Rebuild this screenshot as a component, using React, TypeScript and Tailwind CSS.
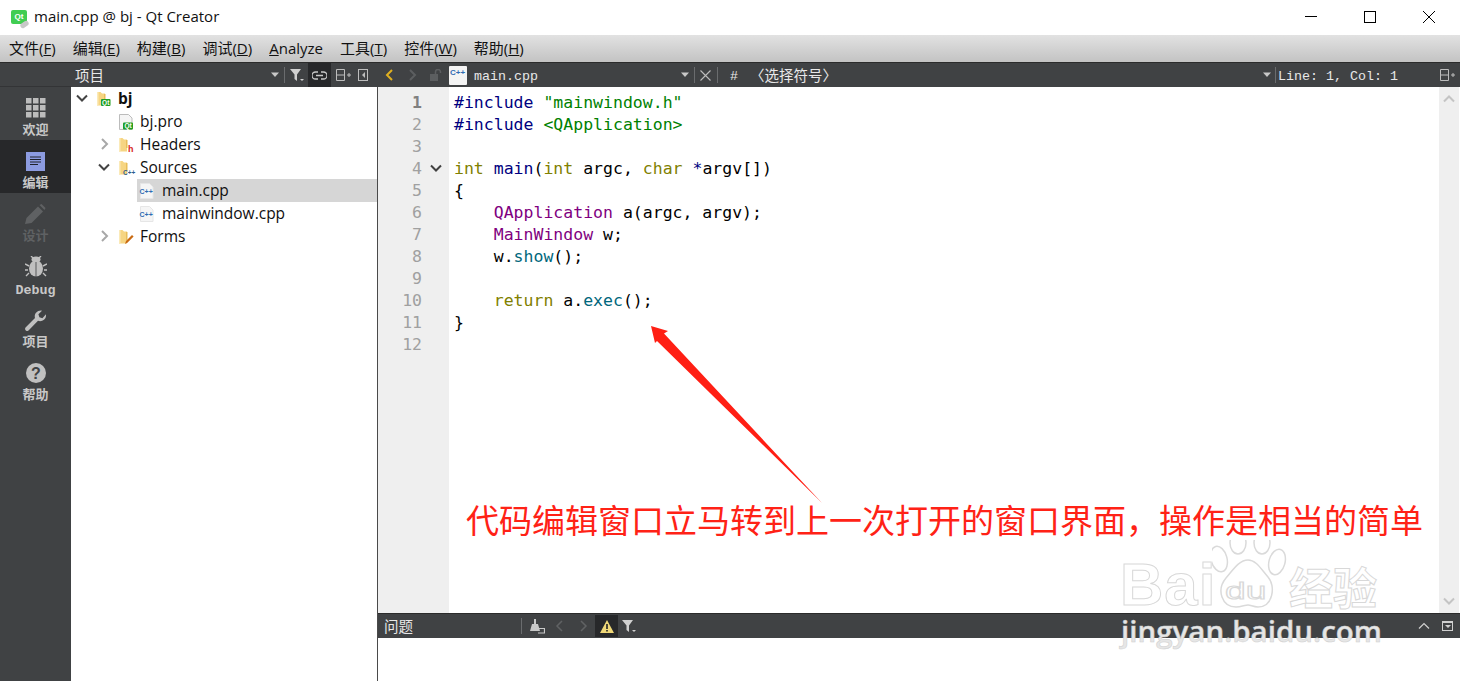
import React from "react";

const mono = "font-['DejaVu_Sans_Mono',monospace]";
const ui = "font-['Open_Sans','Noto_Sans_CJK_SC',sans-serif]";
const tool = "font-['Liberation_Mono','Noto_Sans_CJK_SC',monospace]";

function Tri({ c = "#c8c8c8" }: { c?: string }) {
  return (
    <svg width="10" height="6" viewBox="0 0 10 6">
      <path d="M1 0.5h8L5 5z" fill={c} />
    </svg>
  );
}
function Sep() {
  return <div className="w-px h-[16px] bg-[#6a6c6e]" />;
}
function FilterIcon() {
  return (
    <svg width="15" height="14" viewBox="0 0 15 14">
      <path d="M0 1h11L7 6.5V13L4.500 11V6.500z" fill="#d0d0d0" />
      <path d="M10 11h4l-2 2z" fill="#d0d0d0" />
    </svg>
  );
}
function SplitIcon() {
  return (
    <svg width="15" height="12" viewBox="0 0 15 12" fill="none" stroke="#bdbdbd">
      <path d="M0.5 0.5h8v11h-8zM0.5 6h8M11 6h4M13 4v4" />
    </svg>
  );
}
function Chevron({ dir, c = "#444", s = 12, w = 2 }: { dir: "l" | "r" | "d" | "u"; c?: string; s?: number; w?: number }) {
  const d = { l: "M8 1L3 6l5 5", r: "M4 1l5 5-5 5", d: "M1 3.5l5 5 5-5", u: "M1 8.5l5-5 5 5" }[dir];
  return (
    <svg width={s} height={s} viewBox="0 0 12 12" fill="none" stroke={c} strokeWidth={w}>
      <path d={d} />
    </svg>
  );
}
function Folder({ badge }: { badge: "qt" | "h" | "c" | "form" }) {
  return (
    <svg width="18" height="16" viewBox="0 0 18 16">
      <path d="M1 1h3.5l1.5 1.5h3v12H1z" fill="#f6d582" />
      <path d="M1 1h1.5v13.5H1z" fill="#fbeab8" />
      <path d="M8 3h1.5v8H8z" fill="#e8bd58" />
      {badge === "qt" && (
        <>
          <rect x="5" y="8" width="9.5" height="7" rx="1" fill="#1f9e24" />
          <text x="9.7" y="13.6" fontSize="6.5" fontWeight="700" fill="#fff" textAnchor="middle" fontFamily="Liberation Sans">
            Qt
          </text>
        </>
      )}
      {badge === "h" && (
        <text x="10" y="15" fontSize="9" fontWeight="700" fill="#d8271c" fontFamily="Liberation Sans">
          h
        </text>
      )}
      {badge === "c" && (
        <text x="5" y="15" fontSize="6.5" fontWeight="700" fill="#2e5d8f" fontFamily="Liberation Sans">
          C++
        </text>
      )}
      {badge === "form" && <path d="M7 15l1-3 6-6 1.6 1.6-6 6z" fill="#c96a12" />}
    </svg>
  );
}
function FileIcon({ kind }: { kind: "qt" | "cpp" }) {
  return (
    <svg width="16" height="16" viewBox="0 0 16 16">
      <path d="M1.5 0.5h9l3.5 3.5v11.5H1.5z" fill="#f5f5f5" stroke={kind === "qt" ? "#bcbcbc" : "#e6e6e6"} />
      {kind === "qt" ? (
        <>
          <rect x="5" y="8.5" width="10" height="7" rx="1" fill="#1f9e24" />
          <text x="10" y="14" fontSize="6.5" fontWeight="700" fill="#fff" textAnchor="middle" fontFamily="Liberation Sans">
            Qt
          </text>
        </>
      ) : (
        <text x="0.5" y="10.5" fontSize="7" fontWeight="700" fill="#2f6cb3" fontFamily="Liberation Sans">
          C++
        </text>
      )}
    </svg>
  );
}

function GridIcon() {
  return (
    <svg width="20" height="20" viewBox="0 0 20 20" fill="#bcbcbc">
      {[0, 7, 14].flatMap((y) => [0, 7, 14].map((x) => <rect key={`${x}-${y}`} x={x} y={y} width="5.5" height="5.5" />))}
    </svg>
  );
}
function EditIcon() {
  return (
    <svg width="19" height="19" viewBox="0 0 19 19">
      <rect width="19" height="19" fill="#8c9be0" />
      <path d="M4 5h11M4 7.5h11M4 10h11M4 12.5h8" stroke="#20222a" strokeWidth="1" />
    </svg>
  );
}
function PencilIcon() {
  return (
    <svg width="21" height="21" viewBox="0 0 21 21" fill="#5f6163">
      <path d="M0 20l1.5-6L13 2.5l5 5L6.5 19z" />
      <path d="M14.5 1l2-1 4 4-1 2z" />
    </svg>
  );
}
function BugIcon() {
  return (
    <svg width="22" height="22" viewBox="0 0 22 22" fill="#c0c0c0">
      <ellipse cx="11" cy="12.5" rx="7" ry="8" />
      <ellipse cx="11" cy="3.5" rx="4.5" ry="3" />
      <path d="M10.6 6v15h0.8V6z" fill="#404244" />
      <path d="M0 8l4 2M22 8l-4 2M0 14h3M22 14h-3M1 20l3-3M21 20l-3-3M6 0l2 2M16 0l-2 2" stroke="#c0c0c0" strokeWidth="1.4" />
    </svg>
  );
}
function WrenchIcon() {
  return (
    <svg width="21" height="21" viewBox="0 0 21 21" fill="#c0c0c0">
      <path d="M0.5 17.5L10 8c-1-3 1-7.5 6-7.5l1 .3-3.6 3.4 1 3 3 1L21 4.3c.6 5-4 8-8 6.5L3.5 20.5c-1 .8-2 .7-2.7 0-.8-.8-1-2 -.3-3z" />
    </svg>
  );
}
function HelpIcon() {
  return (
    <svg width="20" height="20" viewBox="0 0 20 20">
      <circle cx="10" cy="10" r="10" fill="#c0c0c0" />
      <text x="10" y="15.5" textAnchor="middle" fontSize="16" fontWeight="700" fill="#404244" fontFamily="Liberation Sans">
        ?
      </text>
    </svg>
  );
}

function Side({ icon, label, active, dim, mono: m }: { icon: React.ReactNode; label: string; active?: boolean; dim?: boolean; mono?: boolean }) {
  return (
    <div className={`h-[53px] flex flex-col items-center pt-[10px] ${active ? "bg-[#27282a]" : ""}`}>
      <div className="h-[22px] flex items-center justify-center">{icon}</div>
      <div
        className={`font-bold leading-[18px] ${m ? "mt-[4px] font-['Liberation_Mono',monospace] text-[13.33px]" : "mt-[1px] font-['Noto_Sans_CJK_SC',sans-serif] text-[13px]"} ${dim ? "text-[#5f6163]" : "text-[#c8c8c8]"}`}
      >
        {label}
      </div>
    </div>
  );
}

function TreeRow({ arrow, indent, icon, label, bold, selected, iconWidth = "w-[24px]" }: { arrow?: "r" | "d"; indent: number; icon: React.ReactNode; label: string; bold?: boolean; selected?: boolean; iconWidth?: string }) {
  return (
    <div className="h-[23px] flex items-center relative">
      <div className={`flex items-center h-full flex-1 ${selected ? "bg-[#d6d6d6]" : ""}`} style={{ marginLeft: indent }}>
        {arrow && (
          <div className="absolute" style={{ left: 27, top: 5 }}>
            <Chevron dir={arrow} c={arrow === "d" ? "#444" : "#a8a8a8"} />
          </div>
        )}
        <div className={`${iconWidth} pl-[2px] flex items-center`}>{icon}</div>
        <span className={`text-[15.5px] text-[#101010] ${ui} ${bold ? "font-bold" : ""}`}>{label}</span>
      </div>
    </div>
  );
}

type Tok = [string, string?];
const P = "#800080";
const O = "#808000";
const N = "#000080";
const G = "#008000";
const F = "#00677c";
const code: Tok[][] = [
  [["#include", N], [" "], ['"mainwindow.h"', G]],
  [["#include", N], [" "], ["<QApplication>", G]],
  [],
  [["int", O], [" "], ["main", N], ["("], ["int", O], [" argc, "], ["char", O], [" "], ["*", N], ["argv[])"]],
  [["{"]],
  [["    "], ["QApplication", P], [" a(argc, argv);"]],
  [["    "], ["MainWindow", P], [" w;"]],
  [["    w."], ["show", F], ["();"]],
  [],
  [["    "], ["return", O], [" a."], ["exec", F], ["();"]],
  [["}"]],
  [],
];

export default function App() {
  return (
    <div className="relative w-[1460px] h-[681px] overflow-hidden bg-white flex flex-col">
      {/* Title bar */}
      <div className="h-[33px] mb-[2px] shrink-0 flex items-center bg-white">
        <div className="ml-[11px] w-[16px] h-[14px] bg-[#41cd52] rounded-[2px] relative flex items-center justify-center">
          <span className="text-[8px] font-bold text-white leading-none font-['Liberation_Sans',sans-serif]">Qt</span>
          <div className="absolute right-[-2px] bottom-[-3px] w-[9px] h-[5px] bg-[#c8c8c8] rounded-full rotate-[-35deg]" />
        </div>
        <span className={`ml-[7px] text-[15px] text-[#111] ${ui}`}>main.cpp @ bj - Qt Creator</span>
        <div className="ml-auto flex items-center">
          <div className="w-[60px] flex justify-center">
            <div className="w-[12px] h-px bg-black" />
          </div>
          <div className="w-[58px] flex justify-center">
            <div className="w-[12px] h-[12px] border border-black" />
          </div>
          <div className="w-[60px] flex justify-center mr-[1px]">
            <svg width="12" height="12" viewBox="0 0 12 12" stroke="#000" strokeWidth="1">
              <path d="M0 0l12 12M12 0L0 12" />
            </svg>
          </div>
        </div>
      </div>
      {/* Menu bar */}
      <div className={`h-[27px] shrink-0 flex items-center pl-[9px] gap-[17px] bg-gradient-to-b from-[#e2e2e2] to-[#c3c3c3] text-[15px] text-[#111] ${ui}`}>
        {[
          ["文件(", "F", ")"],
          ["编辑(", "E", ")"],
          ["构建(", "B", ")"],
          ["调试(", "D", ")"],
          ["", "A", "nalyze"],
          ["工具(", "T", ")"],
          ["控件(", "W", ")"],
          ["帮助(", "H", ")"],
        ].map(([a, b, c]) => (
          <span key={b}>
            {a}
            <span className="underline">{b}</span>
            {c}
          </span>
        ))}
      </div>
      {/* Tool bars */}
      <div className="h-[25px] shrink-0 flex bg-[#404244] border-t border-[#2b2b2b] text-[#e8e8e8]">
        <div className="w-[71px] border-b border-[#333436]" />
        <div className="w-[307px] flex items-center">
          <span className="ml-[4px] text-[14.5px] leading-none font-['Noto_Sans_CJK_SC',sans-serif]">项目</span>
          <div className="ml-auto flex items-center h-full">
            <Tri />
            <div className="ml-[4px]">
              <Sep />
            </div>
            <div className="ml-[5px] w-[15px] flex justify-center">
              <FilterIcon />
            </div>
            <div className="ml-[3px] w-[23px] h-full bg-[#27282a] flex items-center justify-center">
              <svg width="15" height="9" viewBox="0 0 15 9" fill="none" stroke="#c8c8c8" strokeWidth="1.3">
                <path d="M6 1H3.5a3 3 0 000 7H6M9 1h2.500a3 3 0 010 7H9M4 4.500h7" />
              </svg>
            </div>
            <div className="ml-[5px] w-[15px]">
              <SplitIcon />
            </div>
            <div className="ml-[7px] mr-[10px] w-[10px] h-[12px] border border-[#bdbdbd] flex items-center justify-center">
              <div className="w-0 h-0 border-y-[3px] border-y-transparent border-r-[3px] border-r-[#bdbdbd]" />
            </div>
          </div>
        </div>
        <div className="flex-1 flex items-center">
          <div className="ml-[6px]">
            <Chevron dir="l" c="#e0b020" />
          </div>
          <div className="ml-[10px]">
            <Chevron dir="r" c="#5c5e60" />
          </div>
          <svg className="ml-[12px]" width="13" height="12" viewBox="0 0 13 12" fill="#5c5e60">
            <rect x="0" y="5" width="8" height="7" />
            <path d="M5.500 5V3a2.500 2.500 0 015 0v1" fill="none" stroke="#5c5e60" strokeWidth="1.500" />
          </svg>
          <div className="ml-[6px] relative w-[18px] h-[19px] bg-[#f4f4f4] rounded-[1px]">
            <span className="absolute left-[1px] top-[3px] text-[8px] font-bold leading-none text-[#2f6cb3] font-['Liberation_Sans',sans-serif]">C++</span>
          </div>
          <span className={`ml-[7px] w-[206px] pt-[3px] text-[13.33px] ${tool}`}>main.cpp</span>
          <Tri />
          <div className="ml-[4px]">
            <Sep />
          </div>
          <svg className="ml-[5px]" width="11" height="11" viewBox="0 0 11 11" stroke="#bdbdbd" strokeWidth="1.100">
            <path d="M0.500 0.500l10 10M10.500 0.500l-10 10" />
          </svg>
          <div className="ml-[6px]">
            <Sep />
          </div>
          <span className={`ml-[12px] w-[20px] pt-[3px] text-[13.33px] ${tool}`}>#</span>
          <span className="text-[14.5px] whitespace-nowrap font-['Noto_Sans_CJK_SC',sans-serif]">〈选择符号〉</span>
          <div className="ml-auto flex items-center">
            <Tri />
            <div className="ml-[3px]">
              <Sep />
            </div>
            <span className={`ml-[2px] w-[162px] pt-[3px] text-[13.33px] whitespace-pre ${tool}`}>Line: 1, Col: 1</span>
            <div className="mr-[5px]">
              <SplitIcon />
            </div>
          </div>
        </div>
      </div>
      {/* Body */}
      <div className="flex-1 flex min-h-0">
        <div className="w-[71px] shrink-0 bg-[#404244]">
          <Side icon={<GridIcon />} label="欢迎" />
          <Side icon={<EditIcon />} label="编辑" active />
          <Side icon={<PencilIcon />} label="设计" dim />
          <Side icon={<BugIcon />} label="Debug" mono />
          <Side icon={<WrenchIcon />} label="项目" />
          <Side icon={<HelpIcon />} label="帮助" />
        </div>
        <div className="w-[307px] shrink-0 bg-white border-r border-[#4a4a4a] relative">
          <div className="absolute left-[5px] top-[5px]">
            <Chevron dir="d" />
          </div>
          <TreeRow indent={23} icon={<Folder badge="qt" />} label="bj" bold />
          <TreeRow indent={45} icon={<FileIcon kind="qt" />} label="bj.pro" />
          <TreeRow arrow="r" indent={45} icon={<Folder badge="h" />} label="Headers" />
          <TreeRow arrow="d" indent={45} icon={<Folder badge="c" />} label="Sources" />
          <TreeRow indent={66} iconWidth="w-[25px]" icon={<FileIcon kind="cpp" />} label="main.cpp" selected />
          <TreeRow indent={66} iconWidth="w-[25px]" icon={<FileIcon kind="cpp" />} label="mainwindow.cpp" />
          <TreeRow arrow="r" indent={45} icon={<Folder badge="form" />} label="Forms" />
        </div>
        <div className="flex-1 flex flex-col min-w-0">
          <div className="h-[526px] flex shrink-0">
            <div className={`w-[71px] shrink-0 bg-[#efefef] pt-[5px] ${mono} text-[16.5px] leading-[22px] text-[#a0a0a0]`}>
              {code.map((_, i) => (
                <div key={i} className={`h-[22px] relative text-right pr-[27px] ${i === 0 ? "font-bold text-[#808080]" : ""}`}>
                  {i + 1}
                  {i === 3 && (
                    <div className="absolute right-[7px] top-[4px]">
                      <Chevron dir="d" c="#404040" />
                    </div>
                  )}
                </div>
              ))}
            </div>
            <div className={`flex-1 pt-[5px] pl-[5px] ${mono} text-[16.5px] leading-[22px] text-black whitespace-pre`}>
              {code.map((line, i) => (
                <div key={i} className="h-[22px]">
                  {line.map(([t, c], j) => (
                    <span key={j} style={{ color: c }}>
                      {t}
                    </span>
                  ))}
                </div>
              ))}
            </div>
            <div className="w-[20px] mr-[1px] shrink-0 bg-[#efefef] flex flex-col items-center justify-between py-[6px]">
              <Chevron dir="u" c="#c4c4c4" />
              <Chevron dir="d" c="#c4c4c4" />
            </div>
          </div>
          <div className="h-[25px] shrink-0 bg-[#404244] border-t border-[#2b2b2b] flex items-center text-[#e8e8e8]">
            <span className="ml-[6px] w-[137px] text-[14.5px] font-['Noto_Sans_CJK_SC',sans-serif]">问题</span>
            <Sep />
            <svg className="ml-[8px]" width="15" height="15" viewBox="0 0 15 15" fill="#c8c8c8">
              <path d="M4 0h2v5H4zM2 5h6l2 7H0z" />
              <path d="M9 9.500h5.500V14H8" fill="none" stroke="#c8c8c8" strokeWidth="1.200" />
            </svg>
            <div className="ml-[9px]">
              <Chevron dir="l" c="#606264" w={1.5} />
            </div>
            <div className="ml-[11px]">
              <Chevron dir="r" c="#606264" w={1.5} />
            </div>
            <div className="ml-[6px] w-[23px] h-[22px] bg-[#27282a] flex items-center justify-center">
              <svg width="14" height="13" viewBox="0 0 14 13">
                <path d="M7 0l7 13H0z" fill="#f0d878" />
                <path d="M6.200 4h1.600v5H6.200zM6.200 10h1.600v1.600H6.200z" fill="#222" />
              </svg>
            </div>
            <div className="ml-[4px]">
              <FilterIcon />
            </div>
            <div className="ml-auto flex items-center mr-[7px]">
              <Chevron dir="u" c="#d0d0d0" w={1.2} />
              <div className="ml-[12px] w-[11px] h-[10px] border border-[#d0d0d0] border-t-2 flex items-center justify-center">
                <div className="w-0 h-0 border-x-[3px] border-x-transparent border-t-[3px] border-t-[#d0d0d0]" />
              </div>
            </div>
          </div>
          <div className="flex-1 bg-white" />
        </div>
      </div>

      {/* Annotation overlay */}
      <svg className="absolute left-0 top-0 pointer-events-none" width="1460" height="681" viewBox="0 0 1460 681">
        <path d="M651 326L668 331L664 333.500L822 503L657 341L655 343z" fill="#ff1f14" />
      </svg>
      <div className="absolute left-[466px] top-[495px] text-[33px] leading-[48px] whitespace-nowrap text-[#ff2216] font-['Noto_Sans_CJK_SC',sans-serif]">
        代码编辑窗口立马转到上一次打开的窗口界面，操作是相当的简单
      </div>
      {/* Baidu watermark */}
      <div className="absolute left-[1120px] top-[559px] flex items-end h-[52px] pointer-events-none">
        <span className="text-[60px] leading-[52px] font-bold text-white [-webkit-text-stroke:1px_#d8d8d8] font-['Liberation_Sans',sans-serif] tracking-[1px]">Bai</span>
      </div>
      <svg className="absolute left-[1212px] top-[540px] pointer-events-none" width="76" height="72" viewBox="0 0 76 72" fill="#fff" stroke="#dadada" strokeWidth="1.500">
        <ellipse cx="7" cy="19" rx="8" ry="13" transform="rotate(-15 7 19)" />
        <ellipse cx="26" cy="3" rx="8" ry="11" />
        <ellipse cx="50" cy="3" rx="8" ry="11" />
        <ellipse cx="65" cy="22" rx="8" ry="13" transform="rotate(15 65 22)" />
        <path d="M36 20c8 0 13 9 20 17 8 9 5 30-10 30-5 0-7-2-10-2s-7 2-12 2C10 67 4 50 14 38c7-8 13-18 22-18z" />
      </svg>
      <div className="absolute left-[1225px] top-[579px] text-[24px] leading-[24px] origin-left scale-x-[1.55] text-white [-webkit-text-stroke:1px_#d8d8d8] font-['Liberation_Sans',sans-serif] pointer-events-none">du</div>
      <div className="absolute left-[1289px] top-[563px] text-[44px] leading-[46px] font-bold text-white [-webkit-text-stroke:1px_#d8d8d8] font-['Noto_Sans_CJK_SC',sans-serif] pointer-events-none whitespace-nowrap">经验</div>
      <div className="absolute left-[1121px] top-[616px] text-[29.5px] leading-[30px] font-semibold whitespace-nowrap text-[#e6e6e6] [-webkit-text-stroke:0.5px_#cfcfcf] font-['Open_Sans',sans-serif] pointer-events-none">jingyan.baidu.com</div>
    </div>
  );
}
